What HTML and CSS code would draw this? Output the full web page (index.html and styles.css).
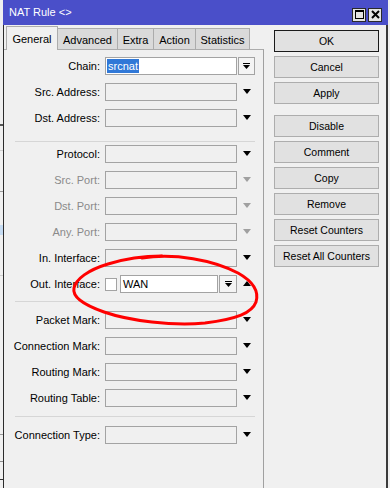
FILE: index.html
```html
<!DOCTYPE html>
<html>
<head>
    <title>NAT Rule</title>
    <link rel="stylesheet" href="styles.css">
</head>
<body>

<div class="desk"></div>

<div class="window">
    <div class="titlebar">
        <span class="title">NAT Rule &lt;&gt;</span>
        <div class="title-buttons">
            <span class="tbtn">
                <svg width="9" height="9" viewBox="0 0 9 9"><rect x="0.5" y="0.5" width="8" height="8" fill="none" stroke="#000"/><rect x="0" y="0" width="9" height="2" fill="#000"/></svg>
            </span>
            <span class="tbtn">
                <svg width="9" height="9" viewBox="0 0 9 9"><path d="M1 1L8 8M8 1L1 8" stroke="#000" stroke-width="2"/></svg>
            </span>
        </div>
    </div>

    <div class="content">
        <div class="left">
            <div class="tabs">
                <div class="tab active t-general">General</div>
                <div class="tab t-advanced">Advanced</div>
                <div class="tab t-extra">Extra</div>
                <div class="tab t-action">Action</div>
                <div class="tab t-stats">Statistics</div>
            </div>

            <div class="panel">
                <div class="row">
                    <span class="label">Chain:</span>
                    <span class="field white"><span class="sel">srcnat</span></span>
                    <span class="dd-btn"><svg width="7" height="6" viewBox="0 0 7 6"><rect x="0" y="0" width="7" height="1"/><path d="M0 2h7L3.5 6z"/></svg></span>
                </div>
                <div class="row">
                    <span class="label">Src. Address:</span>
                    <span class="field"></span>
                    <span class="arrow"><i class="tri"></i></span>
                </div>
                <div class="row">
                    <span class="label">Dst. Address:</span>
                    <span class="field"></span>
                    <span class="arrow"><i class="tri"></i></span>
                </div>

                <div class="sep first"></div>

                <div class="row">
                    <span class="label">Protocol:</span>
                    <span class="field"></span>
                    <span class="arrow"><i class="tri"></i></span>
                </div>
                <div class="row dim">
                    <span class="label">Src. Port:</span>
                    <span class="field"></span>
                    <span class="arrow"><i class="tri"></i></span>
                </div>
                <div class="row dim">
                    <span class="label">Dst. Port:</span>
                    <span class="field"></span>
                    <span class="arrow"><i class="tri"></i></span>
                </div>
                <div class="row dim">
                    <span class="label">Any. Port:</span>
                    <span class="field"></span>
                    <span class="arrow"><i class="tri"></i></span>
                </div>
                <div class="row">
                    <span class="label">In. Interface:</span>
                    <span class="field"></span>
                    <span class="arrow"><i class="tri"></i></span>
                </div>
                <div class="row">
                    <span class="label">Out. Interface:</span>
                    <span class="check"></span>
                    <span class="field white wan">WAN</span>
                    <span class="dd-btn wide"><svg width="7" height="6" viewBox="0 0 7 6"><rect x="0" y="0" width="7" height="1"/><path d="M0 2h7L3.5 6z"/></svg></span>
                    <span class="arrow"><i class="tri up"></i></span>
                </div>

                <div class="sep"></div>

                <div class="row">
                    <span class="label">Packet Mark:</span>
                    <span class="field"></span>
                    <span class="arrow"><i class="tri"></i></span>
                </div>
                <div class="row">
                    <span class="label">Connection Mark:</span>
                    <span class="field"></span>
                    <span class="arrow"><i class="tri"></i></span>
                </div>
                <div class="row">
                    <span class="label">Routing Mark:</span>
                    <span class="field"></span>
                    <span class="arrow"><i class="tri"></i></span>
                </div>
                <div class="row">
                    <span class="label">Routing Table:</span>
                    <span class="field"></span>
                    <span class="arrow"><i class="tri"></i></span>
                </div>

                <div class="sep last"></div>

                <div class="row">
                    <span class="label">Connection Type:</span>
                    <span class="field"></span>
                    <span class="arrow"><i class="tri"></i></span>
                </div>
            </div>
        </div>

        <div class="buttons">
            <div class="btn default">OK</div>
            <div class="btn">Cancel</div>
            <div class="btn">Apply</div>
            <div class="btn group">Disable</div>
            <div class="btn">Comment</div>
            <div class="btn">Copy</div>
            <div class="btn">Remove</div>
            <div class="btn">Reset Counters</div>
            <div class="btn">Reset All Counters</div>
        </div>
    </div>
</div>

<!-- marcação à mão por cima do campo Out. Interface -->
<svg class="scribble" width="390" height="488" viewBox="0 0 390 488">
    <path d="M142 258 C175 253, 213 260, 238 273 C254 282, 259 292, 256 302 C252 313, 237 319, 205 323 C172 326, 130 321, 104 312 C84 305, 72 297, 74 288 C76 279, 88 270, 108 264 C124 259, 140 256, 162 256" fill="none" stroke="#f00" stroke-width="3" stroke-linecap="round" stroke-linejoin="round"/>
</svg>

</body>
</html>
```

FILE: styles.css
```css
body {
    margin: 0;
    display: flex;
    height: 488px;
    overflow: hidden;
    background-color: #f0f0f0;
    font-family: "Liberation Sans", Arial, sans-serif;
    font-size: 11px;
    color: #000;
}
.desk {
    width: 3px;
    flex: none;
    background: linear-gradient(to bottom,
        #f0f0f0 0, #f0f0f0 124px, #555 124px, #555 126px,
        #f0f0f0 126px, #f0f0f0 150px, #cfcfcf 150px, #cfcfcf 151px,
        #f0f0f0 151px, #f0f0f0 191px, #9a9a9a 191px, #9a9a9a 192px,
        #f0f0f0 192px, #f0f0f0 225px, #c6dcf3 225px, #c6dcf3 235px,
        #f0f0f0 235px, #f0f0f0 275px, #cfcfcf 275px, #cfcfcf 276px,
        #f0f0f0 276px, #f0f0f0 434px, #9a9a9a 434px, #9a9a9a 435px,
        #f0f0f0 435px, #f0f0f0 461px, #8c8c8c 461px, #8c8c8c 462px,
        #f0f0f0 462px, #f0f0f0 479px, #333 479px, #333 480px,
        #f0f0f0 480px);
}
.window {
    width: 385px;
    flex: none;
    display: flex;
    flex-direction: column;
}
.titlebar {
    height: 25px;
    flex: none;
    background-color: #4a4fc9;
    color: #fff;
    display: flex;
    align-items: center;
    justify-content: space-between;
    padding: 0 6px 0 6px;
    box-sizing: border-box;
}
.title {
    font-size: 11px;
    padding-bottom: 1px;
}
.title-buttons {
    display: flex;
    gap: 2px;
    padding-top: 4px;
}
.tbtn {
    width: 14px;
    height: 14px;
    box-sizing: border-box;
    border: 1px solid #2a2a2a;
    background-color: #e4e4e4;
    display: flex;
    align-items: center;
    justify-content: center;
}
.content {
    flex: 1;
    display: flex;
    border-left: 1px solid #2b2b2b;
    border-right: 2px solid #3a3a3a;
}
.left {
    width: 260px;
    flex: none;
    display: flex;
    flex-direction: column;
}
.tabs {
    height: 24px;
    display: flex;
    align-items: flex-end;
    padding-left: 2px;
}
.tab {
    height: 21px;
    box-sizing: border-box;
    border: 1px solid #acacac;
    border-bottom: none;
    background-color: #dadada;
    display: flex;
    align-items: center;
    justify-content: center;
    padding-top: 2px;
    white-space: nowrap;
}
.tab + .tab {
    margin-left: -1px;
}
.tab.active {
    height: 24px;
    margin-bottom: -1px;
    background-color: #f0f0f0;
    position: relative;
    z-index: 1;
    padding-top: 0;
}
.t-general { width: 52px; }
.t-advanced { width: 61px; }
.t-extra { width: 37px; }
.t-action { width: 43px; }
.t-stats { width: 55px; }
.panel {
    flex: 1;
    display: flex;
    flex-direction: column;
    border-top: 1px solid #acacac;
    border-right: 1px solid #a0a0a0;
    padding-top: 7px;
}
.row {
    display: flex;
    align-items: center;
    height: 18px;
    margin-bottom: 8px;
}
.label {
    width: 101px;
    flex: none;
    box-sizing: border-box;
    padding-right: 5px;
    text-align: right;
    white-space: nowrap;
}
.row.dim .label {
    color: #8a8a8a;
}
.field {
    width: 132px;
    height: 18px;
    flex: none;
    box-sizing: border-box;
    border: 1px solid #a3a3a3;
    background-color: #f0f0f0;
    display: flex;
    align-items: center;
}
.field.white {
    background-color: #fff;
}
.field.wan {
    width: 98px;
    padding-left: 2px;
}
.sel {
    margin-left: 1px;
    padding: 0 1px;
    line-height: 14px;
    background-color: #3078d7;
    color: #fff;
}
.check {
    width: 12px;
    height: 13px;
    flex: none;
    box-sizing: border-box;
    border: 1px solid #a3a3a3;
    background-color: #fff;
    margin-right: 3px;
}
.dd-btn {
    width: 17px;
    height: 18px;
    flex: none;
    box-sizing: border-box;
    margin-left: 1px;
    border: 1px solid #a3a3a3;
    background-color: #f4f4f4;
    display: flex;
    align-items: center;
    justify-content: center;
}
.dd-btn.wide {
    width: 18px;
}
.arrow {
    width: 19px;
    flex: none;
    display: flex;
    justify-content: center;
    padding-bottom: 2px;
}
.tri {
    width: 0;
    height: 0;
    border-left: 4px solid transparent;
    border-right: 4px solid transparent;
    border-top: 5px solid #000;
}
.tri.up {
    border-top: none;
    border-bottom: 5px solid #000;
}
.row.dim .tri {
    border-top-color: #a0a0a0;
}
.sep {
    height: 1px;
    flex: none;
    background-color: #d6d6d6;
    margin: 0 8px 9px 11px;
}
.sep.first {
    margin-top: 6px;
    margin-bottom: 3px;
}
.sep.last {
    margin-top: 1px;
    margin-bottom: 9px;
}
.buttons {
    display: flex;
    flex-direction: column;
    padding: 5px 0 0 10px;
}
.btn {
    width: 105px;
    height: 22px;
    box-sizing: border-box;
    margin-bottom: 4px;
    border: 1px solid #adadad;
    background-color: #e1e1e1;
    text-align: center;
    line-height: 20px;
    font-size: 10.5px;
    white-space: nowrap;
}
.btn.default {
    border-color: #1a1a1a;
}
.btn.group {
    margin-top: 7px;
}
.scribble {
    position: absolute;
    left: 0;
    top: 0;
    pointer-events: none;
}
```
